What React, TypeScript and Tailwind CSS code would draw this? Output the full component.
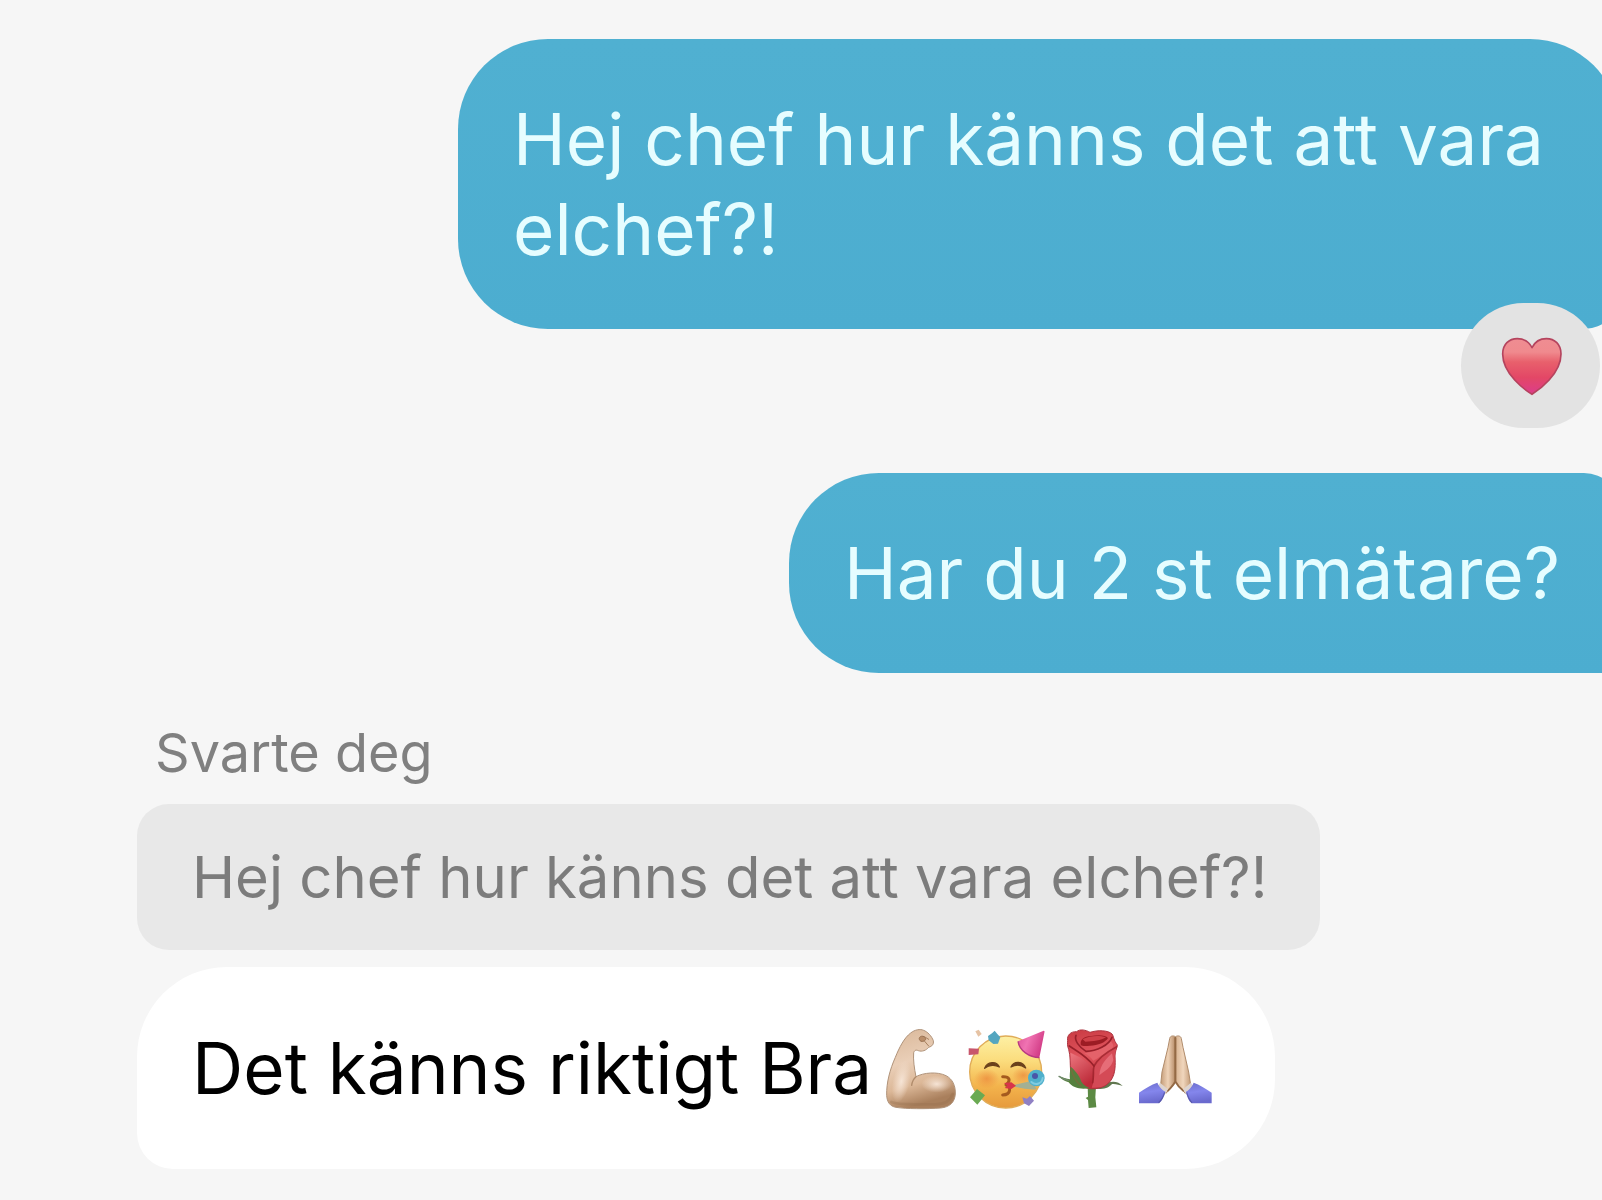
import React from "react";

interface BubbleProps {
  children: React.ReactNode;
}

function OutgoingBubble({ children }: BubbleProps) {
  return (
    <div className="relative w-fit max-w-[1162px] rounded-tl-[90px] rounded-bl-[90px] bg-linear-to-b from-[#50b0d1] to-[#4cadd0] py-[55px] pr-[60px] pl-[55px] text-[71px] leading-[90px] text-[#e6fdff] first:rounded-tr-[90px] last:rounded-tr-[36px] first:rounded-br-[36px]">
      {children}
    </div>
  );
}

function HeartIcon() {
  return (
    <svg viewBox="178 162 192 192" className="h-16 w-16" aria-hidden="true">
      <defs>
        <linearGradient id="heart-fill" x1="0" y1="0" x2="0" y2="1">
          <stop offset="0" stopColor="#ef8d92" />
          <stop offset="0.24" stopColor="#f08a8e" />
          <stop offset="0.42" stopColor="#e8606c" />
          <stop offset="0.7" stopColor="#e34766" />
          <stop offset="1" stopColor="#dc3c8c" />
        </linearGradient>
      </defs>
      <path
        d="M277 343 C256 330 189 282 189 222 C189 193 208 176 233 176 C253 176 268 185 277 203 C286 185 300 176 320 176 C345 176 364 193 364 222 C364 282 298 330 277 343 Z"
        fill="url(#heart-fill)"
        stroke="#b5445e"
        strokeWidth="5"
        strokeLinejoin="round"
      />
    </svg>
  );
}

function BicepsIcon() {
  return (
    <svg viewBox="36 48 252 252" className="h-[84px] w-[84px] shrink-0" role="img" aria-label="Biceps">
      <defs>
        <linearGradient id="arm-fill" x1="0" y1="0" x2="0.25" y2="1">
          <stop offset="0" stopColor="#d9b798" />
          <stop offset="0.45" stopColor="#eacfb8" />
          <stop offset="0.75" stopColor="#dcb898" />
          <stop offset="1" stopColor="#a97f5c" />
        </linearGradient>
        <radialGradient id="arm-shine" cx="0.5" cy="0.5" r="0.5">
          <stop offset="0" stopColor="#f6e4d5" />
          <stop offset="1" stopColor="#f6e4d5" stopOpacity="0" />
        </radialGradient>
      </defs>
      <path
        d="M50 256 C49 218 60 178 76 142 C88 112 103 83 122 69 C134 59 151 56 161 61 C172 65 185 78 190 92 C192 103 186 109 176 112 C169 121 156 126 145 122 C138 119 134 120 131 128 C129 148 133 176 138 200 C160 188 202 184 228 197 C248 207 257 228 256 252 C254 277 240 291 212 294 C170 297 108 297 78 292 C60 289 51 276 50 256 Z"
        fill="url(#arm-fill)"
        stroke="#b0937a"
        strokeWidth="3"
      />
      <ellipse cx="200" cy="222" rx="46" ry="26" fill="url(#arm-shine)" />
      <ellipse cx="94" cy="214" rx="26" ry="64" fill="url(#arm-shine)" transform="rotate(12 94 214)" />
      <path d="M138 200 C130 207 126 217 125 226" fill="none" stroke="#b08b6b" strokeWidth="4" strokeLinecap="round" />
      <path d="M64 276 C90 288 150 281 196 283 C224 283 242 270 248 252" fill="none" stroke="#936c4c" strokeWidth="8" strokeLinecap="round" opacity="0.3" />
      <path d="M148 88 C146 81 154 76 162 80 C168 84 169 90 162 93 C155 96 150 94 148 88 Z" fill="#b98d68" stroke="#9a7252" strokeWidth="3" />
      <path d="M163 80 L176 88 M164 94 L176 108" fill="none" stroke="#a8815f" strokeWidth="3" strokeLinecap="round" />
    </svg>
  );
}

function PartyFaceIcon() {
  return (
    <svg viewBox="288 48 252 252" className="h-[84px] w-[84px] shrink-0" role="img" aria-label="Party face">
      <defs>
        <linearGradient id="face-fill" x1="0" y1="0" x2="0" y2="1">
          <stop offset="0" stopColor="#fdf0a4" />
          <stop offset="0.35" stopColor="#fbdc7c" />
          <stop offset="0.7" stopColor="#f3b34c" />
          <stop offset="1" stopColor="#e69a3c" />
        </linearGradient>
        <radialGradient id="face-cheek" cx="0.5" cy="0.5" r="0.5">
          <stop offset="0" stopColor="#ec8a3c" stopOpacity="0.75" />
          <stop offset="1" stopColor="#ec8a3c" stopOpacity="0" />
        </radialGradient>
        <linearGradient id="hat-fill" x1="0" y1="0" x2="1" y2="0.4">
          <stop offset="0" stopColor="#dc4f98" />
          <stop offset="0.45" stopColor="#f073b2" />
          <stop offset="1" stopColor="#d23c86" />
        </linearGradient>
      </defs>
      <circle cx="407" cy="186" r="108" fill="url(#face-fill)" stroke="#e0ac58" strokeWidth="4" />
      <ellipse cx="350" cy="206" rx="38" ry="30" fill="url(#face-cheek)" />
      <ellipse cx="460" cy="196" rx="34" ry="26" fill="url(#face-cheek)" />
      <path d="M344 175 C352 154 380 152 388 171 C376 164 358 164 344 175 Z" fill="#6b421c" stroke="#6b421c" strokeWidth="4" strokeLinejoin="round" />
      <path d="M423 171 C432 152 459 153 467 174 C454 164 438 163 423 171 Z" fill="#6b421c" stroke="#6b421c" strokeWidth="4" strokeLinejoin="round" />
      <path d="M398 200 C418 199 424 211 408 225 C424 229 424 254 398 255" fill="none" stroke="#a45a1e" strokeWidth="9" strokeLinecap="round" strokeLinejoin="round" />
      <path d="M424 227 L486 212 L500 238 Q462 240 424 227 Z" fill="#a3b094" />
      <path d="M402 219 L424 217 L438 227 L424 237 L404 234 L412 227 Z" fill="#d8344a" />
      <circle cx="499" cy="204" r="25" fill="#4fb0cc" />
      <path d="M484 216 C498 228 516 220 518 204" fill="none" stroke="#7fcbe0" strokeWidth="6" strokeLinecap="round" />
      <circle cx="495" cy="198" r="9" fill="#4a56a8" />
      <path d="M444 94 L521 62 C524 62 524 64 523 68 L508 143 C478 142 448 122 444 94 Z" fill="url(#hat-fill)" />
      <path d="M444 94 C448 122 478 142 508 143" fill="none" stroke="#b83a80" strokeWidth="4" />
      <path d="M354 78 L366 70 L374 62 L382 72 L391 82 L384 101 L370 102 L356 91 Z" fill="#54a6c0" />
      <path d="M316 64 L326 59 L335 72 L325 80 Z" fill="#e6c3a4" />
      <path d="M296 115 L327 116 L325 133 L296 135 Z" fill="#c8566c" />
      <path d="M300 262 L321 237 L345 256 L322 284 Z" fill="#6aaa52" />
      <path d="M457 262 L471 266 L480 258 L492 272 L477 288 L462 280 Z" fill="#9080c4" />
    </svg>
  );
}

function RoseIcon() {
  return (
    <svg viewBox="30 48 252 252" className="h-[84px] w-[84px] shrink-0" role="img" aria-label="Rose">
      <defs>
        <linearGradient id="rose-fill" x1="0" y1="0" x2="0.2" y2="1">
          <stop offset="0" stopColor="#c93a42" />
          <stop offset="0.5" stopColor="#e0555e" />
          <stop offset="1" stopColor="#bd2934" />
        </linearGradient>
        <linearGradient id="rose-petal" x1="0" y1="0" x2="0.5" y2="1">
          <stop offset="0" stopColor="#ee7880" />
          <stop offset="1" stopColor="#bd2c3a" />
        </linearGradient>
      </defs>
      <path d="M143 228 L168 228 L166 262 L169 292 L146 294 L144 270 L137 264 L144 260 Z" fill="#5c8a44" />
      <path d="M248 228 C238 216 222 212 206 217 C194 224 182 230 150 232 C190 243 206 233 216 222 C228 221 238 225 248 228 Z" fill="#60774f" />
      <path
        d="M83 92 C80 76 92 64 110 65 C120 56 138 60 150 67 C172 60 204 60 216 72 C222 80 220 90 232 105 C230 118 225 124 225 138 C226 162 228 190 212 212 C197 232 172 238 150 236 C120 232 98 214 92 186 C90 160 92 140 86 118 C82 108 82 100 83 92 Z"
        fill="url(#rose-fill)"
        stroke="#ad3440"
        strokeWidth="3"
      />
      <path d="M91 128 C112 138 144 150 160 178 C162 198 160 218 153 234 C126 230 102 212 95 182 C92 160 93 144 91 128 Z" fill="url(#rose-petal)" />
      <path d="M230 108 C214 122 184 142 162 174 C164 198 162 216 155 233 C184 236 202 226 213 208 C226 184 224 158 224 138 Z" fill="#d44a56" />
      <path d="M216 130 C202 144 180 162 178 196 C192 184 214 174 220 150 Z" fill="#ec7a84" opacity="0.75" />
      <path d="M122 104 C120 88 132 79 154 78 C174 74 196 74 204 84 C196 98 174 106 150 107 C138 108 128 110 122 104 Z" fill="#9c1c24" />
      <path d="M128 88 C150 76 178 76 198 82 C184 91 158 95 136 95 Z" fill="#cf4149" />
      <path d="M132 130 C160 126 194 112 212 92 C220 102 222 108 216 116 C194 130 176 142 160 152 C152 142 144 134 132 130 Z" fill="#e4626a" />
      <path d="M88 108 C112 124 140 138 162 168 M108 76 C102 90 116 110 138 124 C170 124 206 106 216 82" fill="none" stroke="#98202a" strokeWidth="5" strokeLinecap="round" />
      <path d="M230 110 C204 124 176 142 162 168 C158 184 162 202 158 218" fill="none" stroke="#98202a" strokeWidth="5" strokeLinecap="round" opacity="0.75" />
      <path d="M57 199 C68 202 78 207 90 208 C88 196 90 184 92 170 C104 180 118 196 122 210 C126 222 138 230 150 234 C124 240 98 234 86 217 C74 213 64 208 57 199 Z" fill="#55803e" />
      <path d="M94 178 C98 196 108 214 122 226" fill="none" stroke="#7e6a3c" strokeWidth="5" strokeLinecap="round" opacity="0.7" />
      <path d="M57 199 C67 206 76 209 86 211" fill="none" stroke="#718a6c" strokeWidth="4" strokeLinecap="round" />
    </svg>
  );
}

function PrayingHandsIcon() {
  return (
    <svg viewBox="282 48 252 252" className="h-[84px] w-[84px] shrink-0" role="img" aria-label="Folded hands">
      <defs>
        <linearGradient id="hand-left" x1="0" y1="0" x2="1" y2="0">
          <stop offset="0" stopColor="#c49c78" />
          <stop offset="0.5" stopColor="#efd3b8" />
          <stop offset="1" stopColor="#b68b66" />
        </linearGradient>
        <linearGradient id="hand-right" x1="0" y1="0" x2="1" y2="0">
          <stop offset="0" stopColor="#d9b492" />
          <stop offset="0.5" stopColor="#f0d6bd" />
          <stop offset="1" stopColor="#c49c78" />
        </linearGradient>
        <linearGradient id="sleeve-fill" x1="0" y1="0" x2="0.2" y2="1">
          <stop offset="0" stopColor="#6c6ecc" />
          <stop offset="0.5" stopColor="#8486ec" />
          <stop offset="1" stopColor="#6a6ace" />
        </linearGradient>
      </defs>
      <path d="M406 80 C400 76 390 77 389 86 L384 112 L366 186 L362 224 L378 250 L406 218 Z" fill="url(#hand-left)" stroke="#b08c6c" strokeWidth="3" />
      <path d="M407 80 C412 76 423 77 424 86 L429 112 L446 186 L452 224 L436 250 L407 218 Z" fill="url(#hand-right)" stroke="#b08c6c" strokeWidth="3" />
      <path d="M406 84 L406 214 C401 224 392 234 384 242 M406 214 C412 226 420 234 430 242" fill="none" stroke="#946a45" strokeWidth="6" strokeLinecap="round" />
      <path d="M360 218 L384 238 L372 256 L352 232 Z" fill="#ddd4d0" />
      <path d="M453 218 L429 238 L441 256 L461 232 Z" fill="#ddd4d0" />
      <path d="M297 248 C315 236 334 224 352 218 C358 232 368 241 376 245 C372 260 366 272 357 280 L297 280 Z" fill="url(#sleeve-fill)" />
      <path d="M515 248 C497 236 478 224 461 218 C455 232 446 241 438 245 C441 260 446 272 455 280 L515 280 Z" fill="url(#sleeve-fill)" />
      <path d="M374 247 C370 261 364 271 356 278" fill="none" stroke="#4e4e9c" strokeWidth="4" opacity="0.7" />
      <path d="M440 247 C444 261 448 271 456 278" fill="none" stroke="#4e4e9c" strokeWidth="4" opacity="0.7" />
    </svg>
  );
}

export default function App() {
  return (
    <main className="min-h-screen overflow-hidden bg-[#f6f6f6] pt-[39px] pb-[31px] font-['Inter',sans-serif]">
      {/* Sent messages, running just past the right edge */}
      <section className="-mr-[18px] flex flex-col items-end gap-36">
        <OutgoingBubble>
          <p>Hej chef hur känns det att vara elchef?!</p>
          <button
            aria-label="Heart reaction"
            className="absolute right-5 -bottom-[99px] flex h-[125px] w-[139px] items-center justify-center rounded-full bg-[#e3e3e3]"
          >
            <HeartIcon />
          </button>
        </OutgoingBubble>
        <OutgoingBubble>
          <p>Har du 2 st elmätare?</p>
        </OutgoingBubble>
      </section>

      {/* Reply with the quoted message above it */}
      <section className="mt-12 flex flex-col items-start pl-[137px]">
        <span className="ml-[18px] text-[54px] leading-[64px] text-[#808080]">Svarte deg</span>
        <blockquote className="mt-[19px] rounded-[32px] bg-[#e8e8e8] py-9 pr-[53px] pl-[55px] text-[58px] leading-[74px] text-[#7c7c7c]">
          Hej chef hur känns det att vara elchef?!
        </blockquote>
        <div className="mt-[17px] flex items-center rounded-[90px] rounded-bl-[36px] bg-white py-14 pr-[57px] pl-[55px] text-[71px] leading-[90px] text-black">
          <p>Det känns riktigt Bra</p>
          <div className="ml-2.5 flex">
            <BicepsIcon />
            <PartyFaceIcon />
            <RoseIcon />
            <PrayingHandsIcon />
          </div>
        </div>
      </section>
    </main>
  );
}
